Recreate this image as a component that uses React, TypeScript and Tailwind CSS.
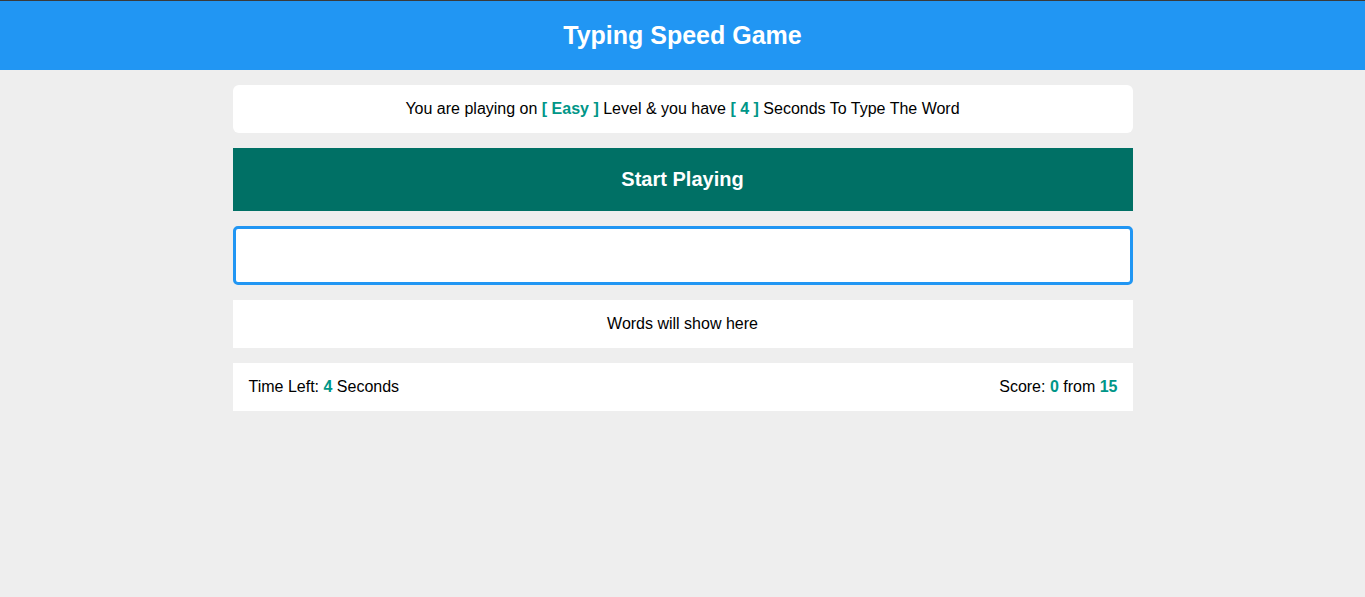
import React from "react";

export default function App() {
  return (
    <div className="min-h-[597px] bg-[#eeeeee] border-t border-[#3a3a3a] font-['Liberation_Sans',Arial,sans-serif] text-black">
      <header className="h-[69px] bg-[#2196f3] flex items-center justify-center">
        <h1 className="text-white font-bold text-[25px] leading-none pb-[1px]">Typing Speed Game</h1>
      </header>
      <main className="w-[900px] mx-auto mt-[15px] flex flex-col gap-[15px]">
        <div className="bg-white rounded-[6px] h-[48px] flex items-center justify-center text-[16px]">
          <span>
            You are playing on{" "}
            <span className="text-[#009688] font-bold">[ Easy ]</span> Level &amp; you have{" "}
            <span className="text-[#009688] font-bold">[ 4 ]</span> Seconds To Type The Word
          </span>
        </div>
        <button className="bg-[#007065] h-[63px] text-white font-bold text-[20px] flex items-center justify-center w-full pb-[1px]">
          Start Playing
        </button>
        <input
          className="h-[59px] bg-white border-[3px] border-[#2196f3] rounded-[5px] outline-none w-full"
          type="text"
        />
        <div className="bg-white h-[48px] flex items-center justify-center text-[16px]">
          Words will show here
        </div>
        <div className="bg-white h-[48px] flex items-center justify-between pl-[16px] pr-[15px] text-[16px]">
          <span>
            Time Left: <span className="text-[#009688] font-bold">4</span> Seconds
          </span>
          <span>
            Score: <span className="text-[#009688] font-bold">0</span> from{" "}
            <span className="text-[#009688] font-bold">15</span>
          </span>
        </div>
      </main>
    </div>
  );
}
